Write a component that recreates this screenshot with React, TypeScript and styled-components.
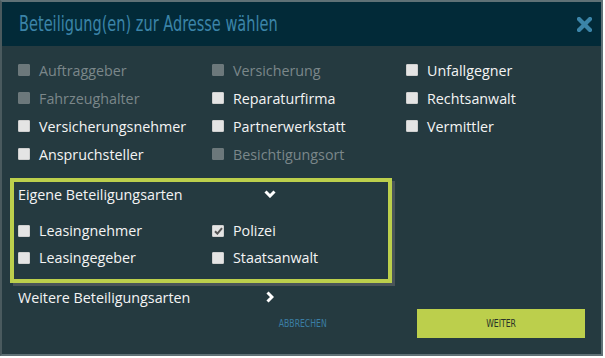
import * as React from 'react';
import styled, { createGlobalStyle } from 'styled-components';

const GlobalStyle = createGlobalStyle`
	body {
		margin: 0;
		background: #ffffff;
		font-family: 'Open Sans', 'Liberation Sans', sans-serif;
	}
`;

const Dialog = styled.section`
	width: 603px;
	height: 356px;
	box-sizing: border-box;
	border: 2px solid #5f7176;
	border-left-color: #4a5a5e;
	background: #253a40;
	display: flex;
	flex-direction: column;
`;

const Header = styled.header`
	height: 44px;
	flex: none;
	background: #022a38;
	display: flex;
	align-items: center;
	justify-content: space-between;
	padding: 0 9px 0 17px;
`;

const Title = styled.h1`
	margin: 0;
	font-family: 'DejaVu Sans Condensed', 'DejaVu Sans', sans-serif;
	font-weight: normal;
	font-size: 21px;
	color: #3b84a8;
	display: inline-block;
	white-space: nowrap;
	transform: scaleX(0.77);
	transform-origin: left center;
`;

const CloseButton = styled.button`
	border: none;
	background: none;
	padding: 0;
	width: 15px;
	height: 15px;
	display: flex;
	cursor: pointer;
`;

const Body = styled.div`
	flex: 1;
	display: flex;
	flex-direction: column;
	padding: 10px 16px 0 16px;
`;

const OptionGrid = styled.div`
	display: grid;
	grid-template-columns: repeat(3, 194px);
	grid-auto-rows: 28px;
`;

const Option = styled.label<{ $disabled?: boolean }>`
	display: flex;
	align-items: center;
	gap: 9px;
	font-size: 14.3px;
	color: ${(p) => (p.$disabled ? '#7b878a' : '#f4f4f4')};
	white-space: nowrap;
`;

const Box = styled.span<{ $disabled?: boolean }>`
	width: 12px;
	height: 12px;
	box-sizing: border-box;
	flex: none;
	background: ${(p) => (p.$disabled ? '#6c787b' : '#e4e4e4')};
	border: 1px solid ${(p) => (p.$disabled ? '#6c787b' : '#cfcfcf')};
	border-radius: 1px;
	display: flex;
	align-items: center;
	justify-content: center;
`;

const CustomGroup = styled.div`
	margin: 10px 0 0 -8px;
	width: 382px;
	height: 105px;
	box-sizing: border-box;
	border: 4px solid #bccf4c;
	box-shadow: 3px 3px 0 #4a5458;
	padding: 0 0 0 4px;
`;

const ToggleRow = styled.div`
	height: 24px;
	display: flex;
	align-items: center;
	font-size: 14.3px;
	color: #f4f4f4;
`;

const ToggleLabel = styled.span`
	width: 244px;
	white-space: nowrap;
`;

const ToggleIcon = styled.span`
	width: 16px;
	display: flex;
	justify-content: center;
`;

const GroupGrid = styled(OptionGrid)`
	margin-top: 11px;
	grid-template-columns: repeat(2, 194px);
	grid-auto-rows: 27px;
`;

const MoreRow = styled(ToggleRow)`
	margin-top: 2px;
`;

const Actions = styled.div`
	display: flex;
	justify-content: flex-end;
	gap: 30px;
`;

const ActionButton = styled.button<{ $primary?: boolean }>`
	width: 168px;
	height: 29px;
	border: none;
	padding: 0;
	background: ${(p) => (p.$primary ? '#bccf4c' : 'transparent')};
	color: ${(p) => (p.$primary ? '#2a3328' : '#3b7ea4')};
	font-family: 'DejaVu Sans Condensed', 'DejaVu Sans', sans-serif;
	font-size: 11px;
	cursor: pointer;
	display: flex;
	align-items: center;
	justify-content: center;
	span {
		display: inline-block;
		transform: scaleX(0.78);
	}
`;

type Item = { label: string; disabled?: boolean; checked?: boolean };

const mainOptions: Item[] = [
	{ label: 'Auftraggeber', disabled: true },
	{ label: 'Versicherung', disabled: true },
	{ label: 'Unfallgegner' },
	{ label: 'Fahrzeughalter', disabled: true },
	{ label: 'Reparaturfirma' },
	{ label: 'Rechtsanwalt' },
	{ label: 'Versicherungsnehmer' },
	{ label: 'Partnerwerkstatt' },
	{ label: 'Vermittler' },
	{ label: 'Anspruchsteller' },
	{ label: 'Besichtigungsort', disabled: true },
];

const customOptions: Item[] = [
	{ label: 'Leasingnehmer' },
	{ label: 'Polizei', checked: true },
	{ label: 'Leasingegeber' },
	{ label: 'Staatsanwalt' },
];

function Checkbox({ label, disabled, checked }: Item) {
	return (
		<Option $disabled={disabled}>
			<Box $disabled={disabled}>
				{checked && (
					<svg width="9" height="8" viewBox="0 0 9 8">
						<path d="M1 4.2 L3.4 6.6 L8 1.2" fill="none" stroke="#555" strokeWidth="2" />
					</svg>
				)}
			</Box>
			{label}
		</Option>
	);
}

export default function App(): JSX.Element {
	return (
		<>
			<GlobalStyle />
			<Dialog>
				<Header>
					<Title>Beteiligung(en) zur Adresse wählen</Title>
					<CloseButton aria-label="Schließen">
						<svg width="15" height="15" viewBox="0 0 15 15">
							<path d="M2 2 L13 13 M13 2 L2 13" stroke="#3b84a8" strokeWidth="4.2" strokeLinecap="square" />
						</svg>
					</CloseButton>
				</Header>
				<Body>
					<OptionGrid>
						{mainOptions.map((o) => (
							<Checkbox key={o.label} {...o} />
						))}
					</OptionGrid>
					<CustomGroup>
						<ToggleRow>
							<ToggleLabel>Eigene Beteiligungsarten</ToggleLabel>
							<ToggleIcon>
								<svg width="12" height="8" viewBox="0 0 12 8">
									<path d="M1.5 1.5 L6 6 L10.5 1.5" fill="none" stroke="#fff" strokeWidth="3" />
								</svg>
							</ToggleIcon>
						</ToggleRow>
						<GroupGrid>
							{customOptions.map((o) => (
								<Checkbox key={o.label} {...o} />
							))}
						</GroupGrid>
					</CustomGroup>
					<MoreRow>
						<ToggleLabel>Weitere Beteiligungsarten</ToggleLabel>
						<ToggleIcon>
							<svg width="8" height="12" viewBox="0 0 8 12">
								<path d="M1.5 1.5 L6 6 L1.5 10.5" fill="none" stroke="#fff" strokeWidth="3" />
							</svg>
						</ToggleIcon>
					</MoreRow>
					<Actions>
						<ActionButton>
							<span>ABBRECHEN</span>
						</ActionButton>
						<ActionButton $primary>
							<span>WEITER</span>
						</ActionButton>
					</Actions>
				</Body>
			</Dialog>
		</>
	);
}
